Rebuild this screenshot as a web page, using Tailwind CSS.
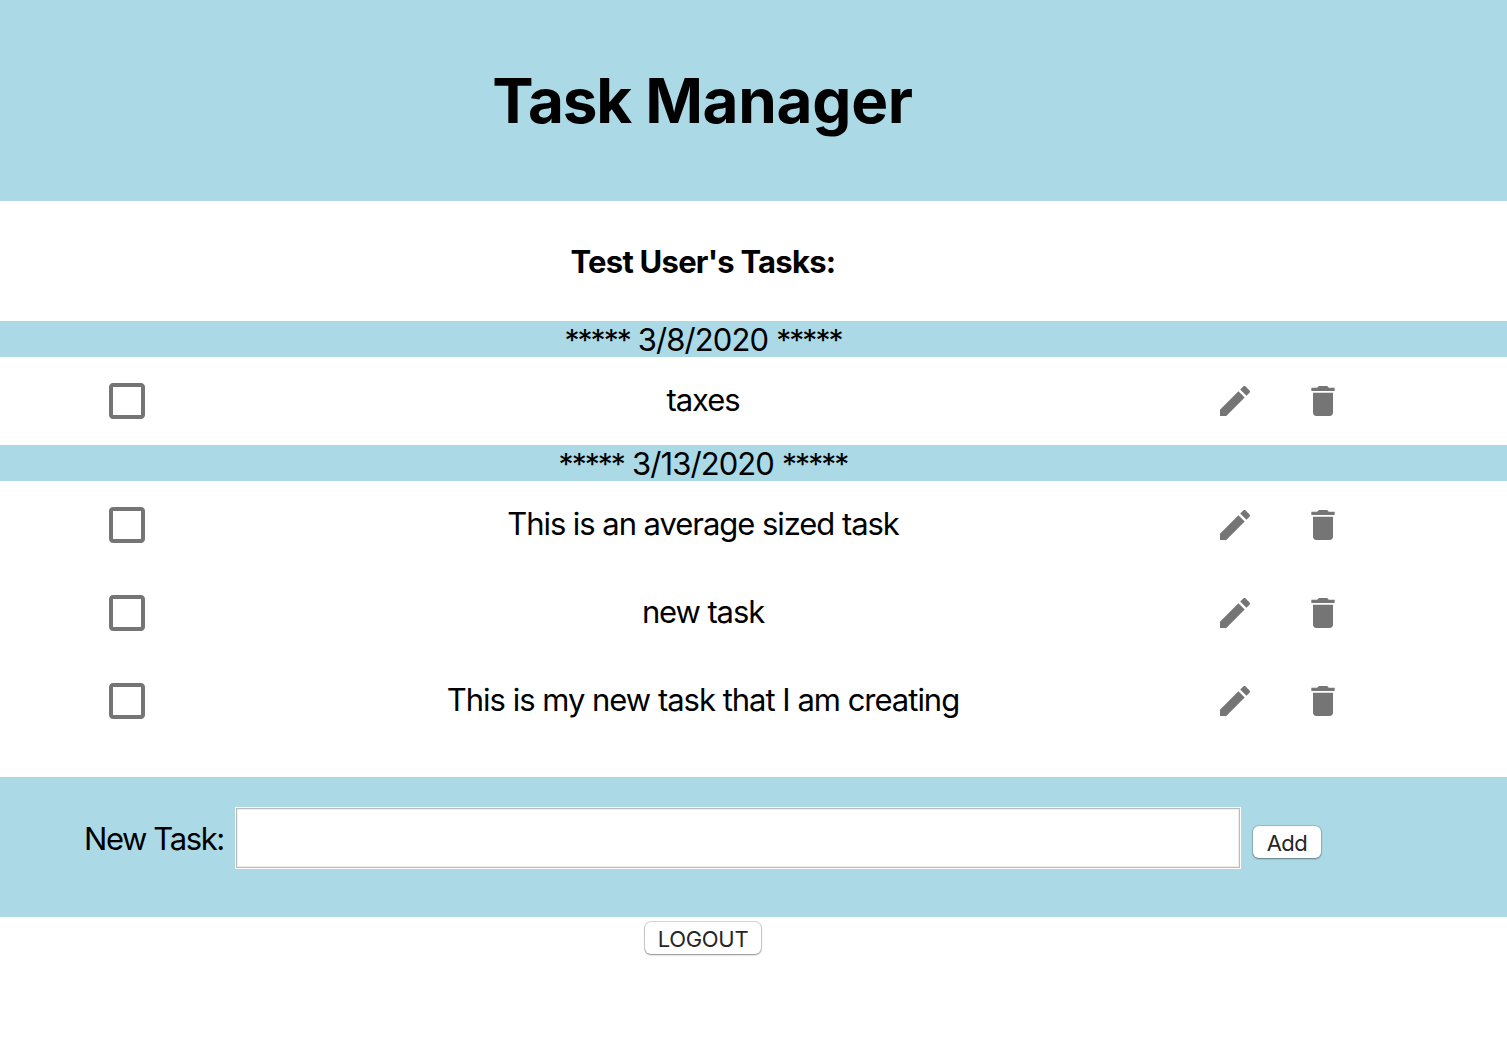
<!DOCTYPE html>
<html lang="en"><head><meta charset="utf-8"><title>Task Manager</title>
<script src="https://cdn.jsdelivr.net/npm/@tailwindcss/browser@4"></script></head>
<body class="min-h-screen bg-white text-black font-['Inter',sans-serif] text-[31px] leading-9">
<svg class="hidden"><defs>
<symbol id="box" viewBox="0 0 24 24"><path d="M19 5v14H5V5h14m0-2H5c-1.1 0-2 .9-2 2v14c0 1.1.9 2 2 2h14c1.1 0 2-.9 2-2V5c0-1.1-.9-2-2-2z"/></symbol>
<symbol id="edit" viewBox="0 0 24 24"><path d="M3 17.25V21h3.75L17.81 9.94l-3.75-3.75L3 17.25zM20.71 7.04c.39-.39.39-1.02 0-1.41l-2.34-2.34c-.39-.39-1.02-.39-1.41 0l-1.83 1.83 3.75 3.75 1.83-1.83z"/></symbol>
<symbol id="trash" viewBox="0 0 24 24"><path d="M6 19c0 1.1.9 2 2 2h8c1.1 0 2-.9 2-2V7H6v12zM19 4h-3.5l-1-1h-5l-1 1H5v2h14V4z"/></symbol>
</defs></svg>
<header class="h-[201px] bg-[#abd9e5] pr-[102px] pt-[61px] text-center"><h1 class="text-[62px] leading-[80px] font-bold tracking-[-0.5px] whitespace-nowrap"><span class="tracking-[-1.2px]">Task</span> <span class="tracking-[-0.3px]">Manager</span></h1></header>
<main>
<h2 class="h-[120px] pr-[101px] pt-[43px] text-center font-bold tracking-[-0.75px]">Test User's Tasks:</h2>
<div class="flex h-9 items-start justify-center gap-2 bg-[#abd9e5] pt-px pr-[101px] leading-9 tracking-[-0.9px]"><span class="text-[30px] tracking-[-1.95px]">*****</span><span>3/8/2020</span><span class="text-[30px] tracking-[-1.95px]">*****</span></div>
<div class="grid h-[88px] grid-cols-[253px_900px_1fr] items-center"><svg class="ml-[103px] size-12 fill-[#757575]"><use href="#box"/></svg><div class="pb-[3px] text-center tracking-[-1.03px]">taxes</div><div class="flex gap-12 pl-[62px]"><svg class="size-10 fill-[#757575]"><use href="#edit"/></svg><svg class="size-10 fill-[#757575]"><use href="#trash"/></svg></div></div>
<div class="flex h-9 items-start justify-center gap-2 bg-[#abd9e5] pt-px pr-[101px] leading-9 tracking-[-0.9px]"><span class="text-[30px] tracking-[-1.95px]">*****</span><span>3/13/2020</span><span class="text-[30px] tracking-[-1.95px]">*****</span></div>
<div class="grid h-[88px] grid-cols-[253px_900px_1fr] items-center"><svg class="ml-[103px] size-12 fill-[#757575]"><use href="#box"/></svg><div class="pb-[3px] text-center tracking-[-1.05px]">This is an average sized task</div><div class="flex gap-12 pl-[62px]"><svg class="size-10 fill-[#757575]"><use href="#edit"/></svg><svg class="size-10 fill-[#757575]"><use href="#trash"/></svg></div></div>
<div class="grid h-[88px] grid-cols-[253px_900px_1fr] items-center"><svg class="ml-[103px] size-12 fill-[#757575]"><use href="#box"/></svg><div class="pb-[3px] text-center tracking-[-1.1px]">new task</div><div class="flex gap-12 pl-[62px]"><svg class="size-10 fill-[#757575]"><use href="#edit"/></svg><svg class="size-10 fill-[#757575]"><use href="#trash"/></svg></div></div>
<div class="grid h-[88px] grid-cols-[253px_900px_1fr] items-center"><svg class="ml-[103px] size-12 fill-[#757575]"><use href="#box"/></svg><div class="pb-[3px] text-center tracking-[-1.01px]">This is my new task that I am creating</div><div class="flex gap-12 pl-[62px]"><svg class="size-10 fill-[#757575]"><use href="#edit"/></svg><svg class="size-10 fill-[#757575]"><use href="#trash"/></svg></div></div>
</main>
<form class="mt-8 flex h-[140px] items-start bg-[#abd9e5] pl-[84px]">
<label for="task" class="mt-11 w-[151px] whitespace-nowrap tracking-[-1.4px]">New Task:</label>
<div class="mt-[30px] h-[62px] w-[1006px] border border-white"><input id="task" class="block h-full w-full border border-[#bcbcbc] bg-white shadow-[inset_0_0_0_1px_#eeeeee] outline-none"></div>
<button type="button" class="mt-[49px] ml-3 h-[32px] w-[68px] rounded-md bg-white text-[22px] leading-[34px] tracking-[-0.5px] text-[#262626] shadow-[0_0_0_1px_rgba(0,0,0,0.12),0_1px_2px_rgba(0,0,0,0.35)]">Add</button>
</form>
<div class="flex justify-center pt-[5px] pr-[101px] pb-4"><button type="button" class="h-[32px] w-[116px] rounded-md bg-white text-[22px] leading-[34px] tracking-[-0.3px] text-[#262626] shadow-[0_0_0_1px_rgba(0,0,0,0.15),0_1px_2px_rgba(0,0,0,0.35)]">LOGOUT</button></div>
</body></html>
